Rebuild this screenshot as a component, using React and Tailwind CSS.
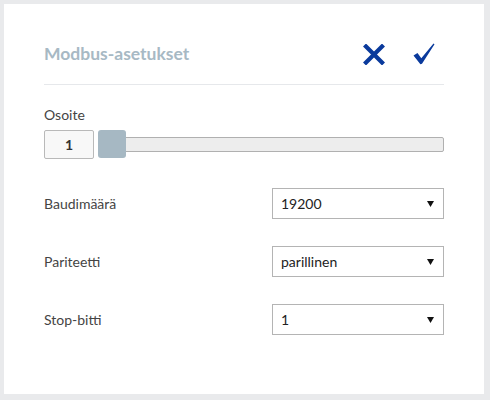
import React from 'react';

const font = { fontFamily: 'Lato, "Open Sans", sans-serif' };

function CloseIcon() {
  return (
    <svg width="22" height="21" viewBox="0 0 22 21" className="block">
      <path d="M3 2.5 L19 18.5 M19 2.5 L3 18.5" stroke="#0a3a9c" strokeWidth="4.2" strokeLinecap="square" fill="none" />
    </svg>
  );
}

function CheckIcon() {
  return (
    <svg width="22" height="22" viewBox="0 0 22 22" className="block">
      <path d="M0.5 12.5 L4.5 10 L8.3 15.2 L20.5 0.5 L21.5 1.3 L9 20.8 L7.4 21.2 Z" fill="#0a3a9c" />
    </svg>
  );
}

function SelectBox({ value }) {
  return (
    <div className="w-[172px] h-[31px] border border-[#b4b4b4] bg-white flex items-center justify-between pl-[8px] pr-[9px]">
      <span className="text-[14px] text-[#222]">{value}</span>
      <svg width="7" height="7" viewBox="0 0 7 7" className="block">
        <path d="M0 1 L7 1 L3.5 7 Z" fill="#111" />
      </svg>
    </div>
  );
}

function Row({ label, value }) {
  return (
    <div className="flex items-center justify-between">
      <span className="text-[14px] text-[#444]">{label}</span>
      <SelectBox value={value} />
    </div>
  );
}

export default function App() {
  return (
    <div className="w-[490px] h-[400px] bg-[#e9eaec] pt-1 pl-1" style={font}>
      <div className="w-[480px] h-[390px] bg-white px-10">
        <div className="pt-[30px] pb-[10px] border-b border-[#e6e8eb]">
          <div className="h-10 flex items-center justify-between">
            <h1 className="text-[17.5px] font-bold text-[#a7b9c4]">Modbus-asetukset</h1>
            <div className="flex items-center gap-[28px] mr-[9px]">
              <CloseIcon />
              <CheckIcon />
            </div>
          </div>
        </div>

        <div className="mt-5">
          <div className="text-[14px] leading-5 text-[#444]">Osoite</div>
          <div className="mt-1 h-[30px] flex items-center">
            <div className="w-[50px] h-[29px] border border-[#b9b9b9] rounded-[2px] bg-[#f8f8f8] flex items-center justify-center text-[14px] font-bold text-[#333]">
              1
            </div>
            <div className="relative flex-1 ml-1 h-[28px] flex items-center">
              <div className="w-full h-[15px] bg-[#ededed] border border-[#b0b0b0] rounded-[2px]" />
              <div className="absolute left-0 top-0 w-[28px] h-[28px] rounded-[3px] bg-[#a6b8c3]" />
            </div>
          </div>
        </div>

        <div className="mt-[29px] flex flex-col gap-[27px]">
          <Row label="Baudimäärä" value="19200" />
          <Row label="Pariteetti" value="parillinen" />
          <Row label="Stop-bitti" value="1" />
        </div>
      </div>
    </div>
  );
}
